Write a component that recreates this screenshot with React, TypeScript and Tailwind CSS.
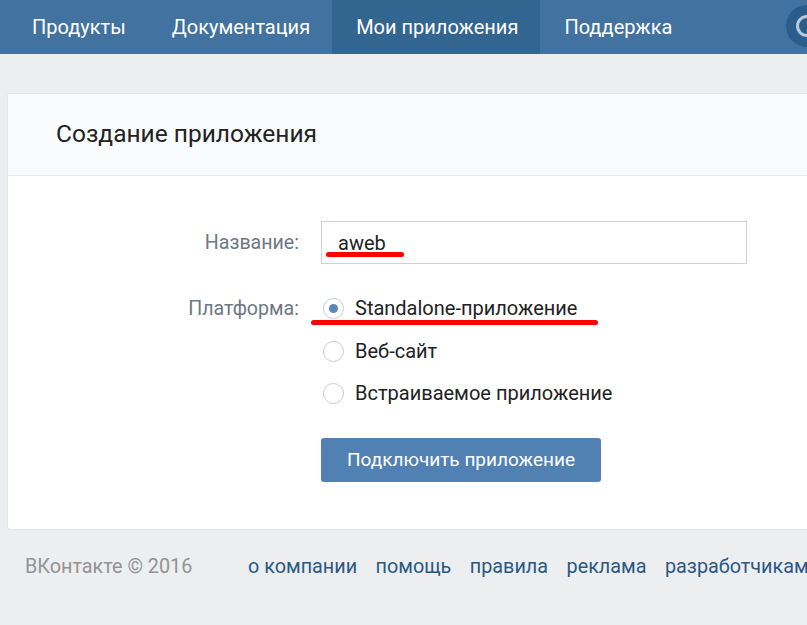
import React from "react";

const font = { fontFamily: "Roboto, 'Noto Sans', sans-serif" };

function Radio({ checked }: { checked?: boolean }) {
  return (
    <span className="flex h-[21px] w-[21px] shrink-0 items-center justify-center rounded-full border border-[#c3ccd6] bg-white">
      {checked && <span className="h-[9px] w-[9px] rounded-full bg-[#5b87b6]" />}
    </span>
  );
}

function RedMark({ className }: { className: string }) {
  return <span className={`pointer-events-none absolute h-[5px] rounded-full bg-[#f00] ${className}`} />;
}

export default function App() {
  const tabs = ["Продукты", "Документация", "Мои приложения", "Поддержка"];
  const links = ["о компании", "помощь", "правила", "реклама", "разработчикам"];

  return (
    <div className="h-[625px] w-[807px] overflow-hidden bg-[#edeef0]" style={font}>
      <header className="relative flex h-[54px] bg-[#42729f] pl-[8px] text-[20px] text-white">
        {tabs.map((t, i) => (
          <div
            key={t}
            className={`flex items-center pl-[24px] pr-[22px] ${i === 2 ? "bg-[#336591]" : ""}`}
          >
            {t}
          </div>
        ))}
        <span className="absolute left-[786px] top-[5px] flex h-[42px] w-[42px] items-center justify-center rounded-full bg-[#2a5d8c]">
          <span className="h-[22px] w-[22px] rounded-full border-[3px] border-[#b9c9da]" />
        </span>
      </header>

      <div className="pl-[7px] pt-[39px]">
        <section className="w-[830px] rounded-[3px] border border-[#e3e4e8] bg-white">
          <div className="flex h-[82px] items-center border-b border-[#e7e8ec] bg-[#fafbfc] pl-[48px] text-[24.5px] text-[#222]">
            Создание приложения
          </div>

          <div className="relative pb-[47px] pt-[45px]">
            <div className="flex items-center">
              <div className="w-[313px] pr-[22px] text-right text-[19.6px] text-[#6d7885]">Название:</div>
              <div className="flex h-[43px] w-[426px] items-center border border-[#ccd2d8] pl-[16px] text-[20px] text-[#222]">
                aweb
              </div>
            </div>

            <div className="mt-[28px] flex">
              <div className="w-[313px] pr-[22px] pt-[1px] text-right text-[19.6px] leading-[32px] text-[#6d7885]">Платформа:</div>
              <div className="flex flex-col">
                <label className="flex h-[32px] items-center gap-[11px] pl-[2px] text-[20px] text-[#222]">
                  <Radio checked />
                  Standalone-приложение
                </label>
                <label className="mt-[11px] flex h-[32px] items-center gap-[11px] pl-[2px] text-[20px] text-[#222]">
                  <Radio />
                  Веб-сайт
                </label>
                <label className="mt-[10px] flex h-[32px] items-center gap-[11px] pl-[2px] text-[20px] text-[#222]">
                  <Radio />
                  Встраиваемое приложение
                </label>
                <button className="mt-[29px] h-[44px] w-[280px] rounded-[3px] bg-[#5181b3] text-[19px] text-white">
                  Подключить приложение
                </button>
              </div>
            </div>

            <RedMark className="left-[318px] top-[76px] w-[78px]" />
            <RedMark className="left-[303px] top-[144px] w-[287px]" />
          </div>
        </section>
      </div>

      <footer className="flex items-center pl-[25px] pt-[22px] text-[19.8px]">
        <span className="w-[223px] shrink-0 text-[#939393]">ВКонтакте © 2016</span>
        <div className="flex gap-[18.5px] whitespace-nowrap text-[#2a5885]">
          {links.map((l) => (
            <span key={l}>{l}</span>
          ))}
        </div>
      </footer>
    </div>
  );
}
